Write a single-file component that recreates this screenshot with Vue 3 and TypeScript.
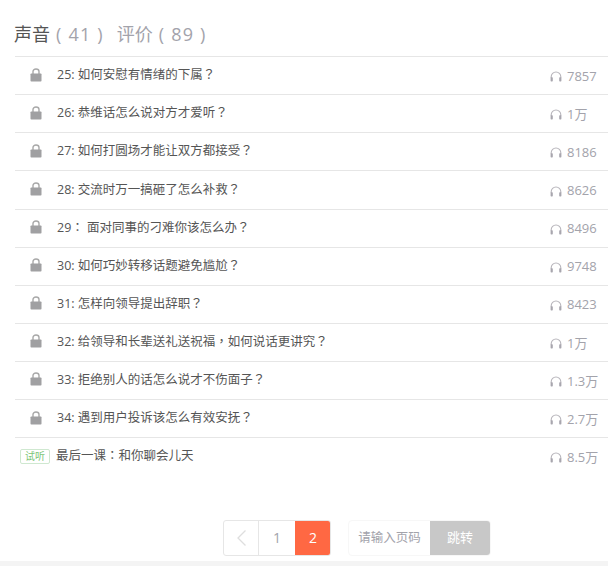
<script setup lang="ts">
interface Lesson { title: string; plays: string }
interface Segment { text: string; punct: boolean }
const lessons: Lesson[] = [
  { title: '25: 如何安慰有情绪的下属？', plays: '7857' },
  { title: '26: 恭维话怎么说对方才爱听？', plays: '1万' },
  { title: '27: 如何打圆场才能让双方都接受？', plays: '8186' },
  { title: '28: 交流时万一搞砸了怎么补救？', plays: '8626' },
  { title: '29： 面对同事的刁难你该怎么办？', plays: '8496' },
  { title: '30: 如何巧妙转移话题避免尴尬？', plays: '9748' },
  { title: '31: 怎样向领导提出辞职？', plays: '8423' },
  { title: '32: 给领导和长辈送礼送祝福，如何说话更讲究？', plays: '1万' },
  { title: '33: 拒绝别人的话怎么说才不伤面子？', plays: '1.3万' },
  { title: '34: 遇到用户投诉该怎么有效安抚？', plays: '2.7万' },
]
// Full-width punctuation sits centred in its cell in the reference, as the TC face draws it.
function segments(title: string): Segment[] {
  return title
    .split(/([？，：])/)
    .filter((text) => text.length > 0)
    .map((text) => ({ text, punct: /^[？，：]$/.test(text) }))
}
</script>

<template>
  <div class="page">
    <div class="tabs">
      <span class="tab active">声音</span>
      <span class="count">( 41 )</span>
      <span class="tab second">评价</span>
      <span class="count">( 89 )</span>
    </div>
    <ul class="list">
      <li v-for="l in lessons" :key="l.title" class="row">
        <svg class="lock" width="12" height="14" viewBox="0 0 12 14">
          <path d="M3 6.500V3.600C3 2 4.200 1 6 1s3 1 3 2.600V6.500" fill="none" stroke="#a8a8a8" stroke-width="1.400" />
          <rect x="0.500" y="5.500" width="11" height="8" rx="0.800" fill="#a0a0a2" />
        </svg>
        <span class="title"><span v-for="(s, i) in segments(l.title)" :key="i" :class="{ punct: s.punct }">{{ s.text }}</span></span>
        <span class="plays">
          <svg class="phones" width="12" height="11" viewBox="0 0 12 11">
            <path d="M1.200 7V5.800a4.800 4.800 0 0 1 9.600 0V7" fill="none" stroke="#b8b6bc" stroke-width="1.100" />
            <rect x="0.600" y="6.200" width="2.200" height="4.300" rx="0.700" fill="#a8a6ae" />
            <rect x="9.200" y="6.200" width="2.200" height="4.300" rx="0.700" fill="#a8a6ae" />
          </svg>
          <span>{{ l.plays }}</span>
        </span>
      </li>
      <li class="row last">
        <span class="trial">试听</span>
        <span class="title trial-title"><span v-for="(s, i) in segments('最后一课：和你聊会儿天')" :key="i" :class="{ punct: s.punct }">{{ s.text }}</span></span>
        <span class="plays">
          <svg class="phones" width="12" height="11" viewBox="0 0 12 11">
            <path d="M1.200 7V5.800a4.800 4.800 0 0 1 9.600 0V7" fill="none" stroke="#b8b6bc" stroke-width="1.100" />
            <rect x="0.600" y="6.200" width="2.200" height="4.300" rx="0.700" fill="#a8a6ae" />
            <rect x="9.200" y="6.200" width="2.200" height="4.300" rx="0.700" fill="#a8a6ae" />
          </svg>
          <span>8.5万</span>
        </span>
      </li>
    </ul>
    <div class="pager">
      <div class="pages">
        <span class="pg prev">
          <svg width="11" height="18" viewBox="0 0 11 18">
            <path d="M9.500 1.500L2 9l7.500 7.500" fill="none" stroke="#dedede" stroke-width="1.300" />
          </svg>
        </span>
        <span class="pg">1</span>
        <span class="pg current">2</span>
      </div>
      <div class="jump">
        <span class="jump-input">请输入页码</span>
        <span class="jump-btn">跳转</span>
      </div>
    </div>
    <div class="footer-band"></div>
  </div>
</template>

<style>
html, body { margin: 0; background: #fff; }
</style>

<style scoped>
.page {
  width: 608px;
  height: 566px;
  overflow: hidden;
  display: flex;
  flex-direction: column;
  font-family: "Open Sans", "Noto Sans CJK SC", sans-serif;
  color: #505050;
}
.tabs {
  height: 56.200px;
  flex: none;
  box-sizing: border-box;
  padding: 21px 0 9px 14px;
  display: flex;
  align-items: center;
  font-size: 18px;
  line-height: 26px;
}
.tab { color: #a3a3ab; }
.tab.active { color: #555; }
.tab.second { margin-left: 13px; }
.count { color: #a3a3ab; margin-left: 6px; letter-spacing: 1.200px; white-space: pre; }
.list {
  list-style: none;
  margin: 0 0 0 15px;
  padding: 0;
  flex: none;
}
.row {
  height: 38.100px;
  box-sizing: border-box;
  border-top: 1px solid #e6e6e6;
  display: flex;
  align-items: center;
  padding-right: 12px;
}
.lock { margin-left: 15px; margin-top: -2px; flex: none; }
.title {
  margin-left: 15px;
  font-size: 12.500px;
  line-height: 18px;
  color: #555;
  flex: 1;
  margin-top: -2px;
}
.punct { font-family: "Noto Sans CJK TC", sans-serif; }
.plays {
  font-size: 13px;
  color: #a3a3ab;
  width: 46px;
  flex: none;
  white-space: nowrap;
  display: flex;
  align-items: center;
  gap: 5px;
}
.phones { flex: none; margin-top: 2px; }
.trial {
  margin-left: 5px;
  width: 30px;
  height: 15px;
  box-sizing: border-box;
  border: 1px solid #cfe8d0;
  border-radius: 2px;
  color: #7cc576;
  font-size: 10px;
  line-height: 13px;
  text-align: center;
  flex: none;
}
.trial-title { margin-left: 6px; }
.pager {
  margin-top: 44.700px;
  margin-left: 223px;
  display: flex;
  gap: 18px;
  height: 36px;
  flex: none;
}
.pages {
  display: flex;
  height: 36px;
  box-sizing: border-box;
  border: 1px solid #e6e6e6;
  border-radius: 3px;
  overflow: hidden;
}
.pg {
  width: 36px;
  display: flex;
  align-items: center;
  justify-content: center;
  font-size: 14px;
  color: #a3a3ab;
  box-sizing: border-box;
}
.prev { border-right: 1px solid #e6e6e6; width: 35px; }
.current { background: #ff6843; color: #fff; margin-right: -1px; }
.jump {
  display: flex;
  height: 36px;
  border-radius: 4px;
  overflow: hidden;
  border: 1px solid #f7f7f7;
  box-sizing: border-box;
  margin-left: -1px;
}
.jump-input {
  width: 81px;
  display: flex;
  align-items: center;
  justify-content: center;
  font-size: 12.500px;
  color: #a3a3ab;
  padding-bottom: 2px;
  box-sizing: border-box;
}
.jump-btn {
  width: 60px;
  background: #c8c8c8;
  color: #fff;
  font-size: 13px;
  display: flex;
  align-items: center;
  justify-content: center;
  padding-bottom: 2px;
  box-sizing: border-box;
}
.footer-band { margin-top: 5px; height: 5px; background: #f4f4f4; flex: none; }
</style>
